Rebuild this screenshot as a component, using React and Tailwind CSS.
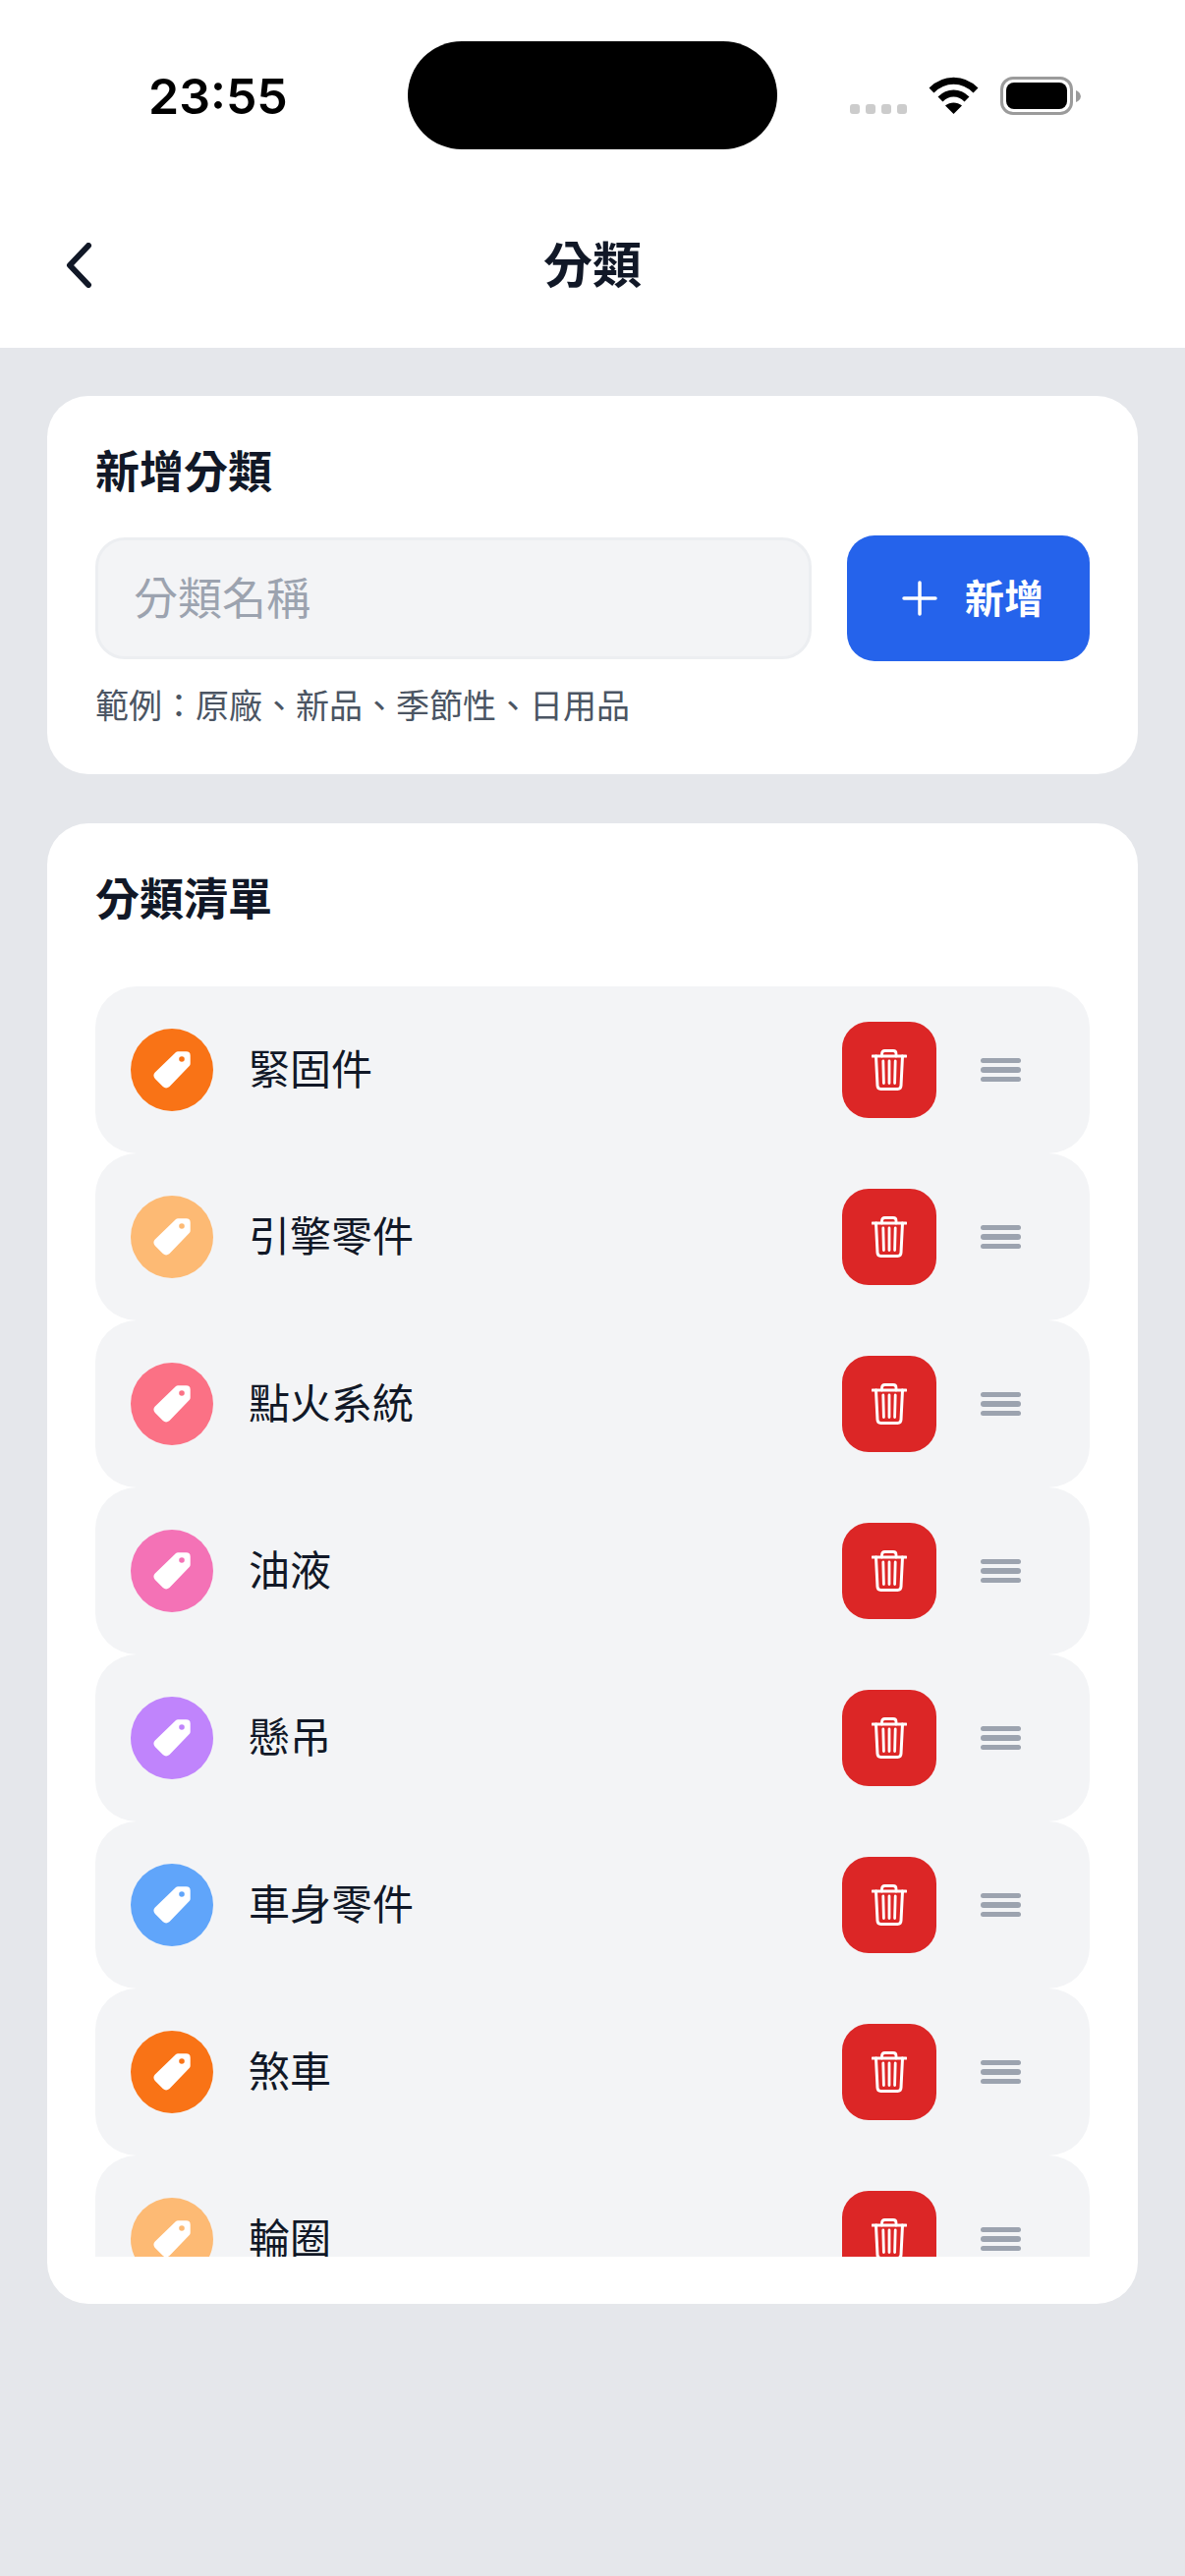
const categories = [
  { name: "緊固件", color: "bg-[#f97316]" },
  { name: "引擎零件", color: "bg-[#fdba74]" },
  { name: "點火系統", color: "bg-[#fb7185]" },
  { name: "油液", color: "bg-[#f472b6]" },
  { name: "懸吊", color: "bg-[#c084fc]" },
  { name: "車身零件", color: "bg-[#60a5fa]" },
  { name: "煞車", color: "bg-[#f97316]" },
  { name: "輪圈", color: "bg-[#fdba74]" },
];

function TagIcon() {
  return (
    <svg width="38" height="38" viewBox="0 0 38 38">
      <path
        fillRule="evenodd"
        fill="#fff"
        d="M23 1 Q24 0.3 25 0.3 L33.5 0.3 Q37.7 0.3 37.7 4.5 L37.7 12.5 Q37.7 14 36.7 15 L16.5 36 Q13 38.8 9.8 36 L1.8 28 Q-1 24.8 1.8 21.6 Z M29 5.2 A2.8 2.8 0 1 0 29 10.8 A2.8 2.8 0 1 0 29 5.2 Z"
      />
    </svg>
  );
}

function TrashIcon() {
  return (
    <svg width="36" height="42" viewBox="0 0 36 42" fill="none" stroke="#fff" strokeLinecap="round" strokeLinejoin="round">
      <path d="M1 7 H35" strokeWidth="3" />
      <path d="M10.5 7 V4.5 Q10.5 1.5 13.5 1.5 H22 Q25 1.5 25 4.5 V7" strokeWidth="2.8" />
      <path d="M4.5 7 L6 37 Q6.2 40.5 9.5 40.5 H26.5 Q29.8 40.5 30 37 L31.5 7" strokeWidth="3" />
      <path d="M11.8 12 L12.4 34.5 M18 12 V34.5 M24.2 12 L23.6 34.5" strokeWidth="2.8" />
    </svg>
  );
}

function CategoryRow({ name, color }) {
  return (
    <div className="flex h-[170px] shrink-0 items-center rounded-[42px] bg-[#f3f4f6] pl-[36px] pr-[70px]">
      <div className={`flex h-[84px] w-[84px] shrink-0 items-center justify-center rounded-full ${color}`}>
        <TagIcon />
      </div>
      <span className="mb-[6px] ml-[36px] flex-1 text-[42px] leading-[54px] text-[#111827]">{name}</span>
      <button className="flex h-[98px] w-[96px] items-center justify-center rounded-[27px] bg-[#dc2626]">
        <TrashIcon />
      </button>
      <div className="ml-[45px] flex w-[41px] flex-col gap-[4px]">
        <div className="h-[5.5px] rounded-full bg-[#9ca3af]"></div>
        <div className="h-[5.5px] rounded-full bg-[#9ca3af]"></div>
        <div className="h-[5.5px] rounded-full bg-[#9ca3af]"></div>
      </div>
    </div>
  );
}

function App() {
  return (
    <div className="min-h-[2622px] bg-[#e5e7eb] font-['Noto_Sans_CJK_TC',sans-serif]">
      <div className="bg-white">
        {/* status bar */}
        <div className="flex h-[190px] items-start pl-[151px] pt-[42px]">
          <span className="mt-[25px] w-[264px] font-['Inter',sans-serif] text-[50px] font-semibold leading-[62px] text-black">23:55</span>
          <div className="h-[110px] w-[376px] rounded-[55px] bg-black"></div>
          <div className="ml-[74px] mt-[64px] flex gap-[6px]">
            <div className="h-[10px] w-[10px] rounded-[3px] bg-[#cccccc]"></div>
            <div className="h-[10px] w-[10px] rounded-[3px] bg-[#cccccc]"></div>
            <div className="h-[10px] w-[10px] rounded-[3px] bg-[#cccccc]"></div>
            <div className="h-[10px] w-[10px] rounded-[3px] bg-[#cccccc]"></div>
          </div>
          <svg className="ml-[22px] mt-[36px]" width="51" height="38" viewBox="0 0 51 38" fill="none" stroke="#000" strokeWidth="7">
            <path d="M3 14 C16 1 35 1 48 14" />
            <path d="M12 23 C20 15 31 15 39 23" />
            <path d="M25.5 38 L17 29.5 C22 25.5 29 25.5 34 29.5 Z" fill="#000" stroke="none" />
          </svg>
          <div className="ml-[22px] mt-[36px] flex items-center">
            <div className="h-[39px] w-[74px] rounded-[13px] border-[3px] border-[#9b9b9b] p-[3px]">
              <div className="h-full w-full rounded-[8px] bg-black"></div>
            </div>
            <svg className="ml-[3px]" width="5" height="12" viewBox="0 0 5 12">
              <path d="M0 0 L2 1 Q5 3 5 6 Q5 9 2 11 L0 12 Z" fill="#9b9b9b" />
            </svg>
          </div>
        </div>
        {/* nav */}
        <div className="relative flex h-[164px] items-center justify-center">
          <svg className="absolute left-[65px] top-[57px]" width="30" height="46" viewBox="0 0 30 46" fill="none" stroke="#111827" strokeWidth="6" strokeLinecap="round" strokeLinejoin="round">
            <path d="M25 3 L6 23 L25 43" />
          </svg>
          <h1 className="mb-[12px] text-[50px] font-bold leading-none text-[#111827]">分類</h1>
        </div>
      </div>

      <div className="flex flex-col gap-[50px] px-[48px] pt-[49px]">
        <div className="h-[385px] rounded-[42px] bg-white px-[49px] pt-[43px]">
          <h2 className="text-[45px] font-bold leading-[64px] text-[#111827]">新增分類</h2>
          <div className="mt-[35px] flex items-center gap-[36px]">
            <input
              placeholder="分類名稱"
              className="h-[124px] w-[729px] rounded-[30px] border-[3px] border-[#eceef1] bg-[#f3f4f6] px-[36px] pb-[6px] text-[45px] placeholder:text-[#9ca3af]"
            />
            <button className="flex h-[128px] w-[247px] items-center justify-center gap-[28px] rounded-[28px] bg-[#2563eb] pl-[9px] text-[40px] font-bold text-white">
              <svg width="36" height="36" viewBox="0 0 36 36" fill="none" stroke="#fff" strokeWidth="3.5" strokeLinecap="round">
                <path d="M18 2 V34 M2 18 H34" />
              </svg>
              <span className="mb-[5px]">新增</span>
            </button>
          </div>
          <p className="mt-[19px] text-[34px] leading-[50px] text-[#4b5563]">範例：原廠、新品、季節性、日用品</p>
        </div>

        <div className="h-[1507px] rounded-[42px] bg-white px-[49px] pt-[43px]">
          <h2 className="text-[45px] font-bold leading-[64px] text-[#111827]">分類清單</h2>
          <div className="mt-[59px] flex h-[1293px] flex-col overflow-hidden">
            {categories.map((c) => (
              <CategoryRow key={c.name} name={c.name} color={c.color} />
            ))}
          </div>
        </div>
      </div>
    </div>
  );
}

export default App;
